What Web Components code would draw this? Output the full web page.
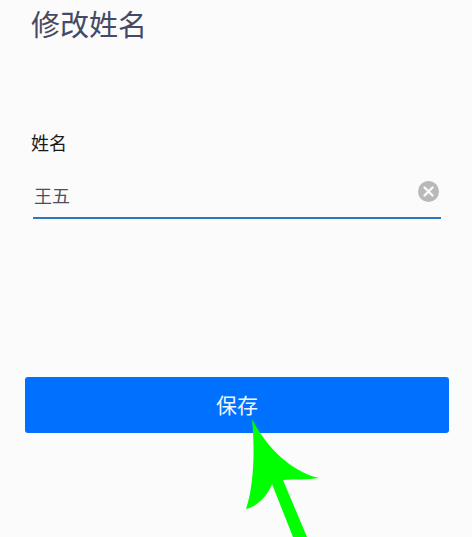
<!DOCTYPE html>
<html lang="zh">
<head>
<meta charset="utf-8">
<style>
  html, body { margin: 0; height: 100%; background: #fbfbfb; overflow: hidden; }
  body { font-family: "Noto Sans CJK SC", "Noto Sans", sans-serif; }
</style>
</head>
<body>
<edit-name-page>
  <span slot="title">修改姓名</span>
  <name-field label="姓名" value="王五"></name-field>
  <save-button slot="action">保存</save-button>
</edit-name-page>

<script>
class EditNamePage extends HTMLElement {
  connectedCallback() {
    if (!this.shadowRoot) this.attachShadow({ mode: 'open' })
    this.shadowRoot.innerHTML = `
      <style>
        :host { display: block; position: relative; width: 472px; height: 537px; overflow: hidden; }
        .title { padding: 3px 0 0 31px; font-size: 29px; line-height: 40px; color: #444a66; }
        .body { padding: 86px 31px 0 31px; }
        .action { padding: 158px 23px 0 25px; }
        svg { position: absolute; left: 0; top: 0; }
      </style>
      <div class="title"><slot name="title"></slot></div>
      <div class="body"><slot></slot></div>
      <div class="action"><slot name="action"></slot></div>
      <svg width="472" height="537" viewBox="0 0 472 537" aria-hidden="true">
        <path fill="#00ff00" d="M252 419 C264 442 286 470 319 478 C308 480 295 479 283 480 L307 537 L293 537 L272 484 C268 495 258 506 246 509 C254 485 255 450 252 419 Z"/>
      </svg>
    `
  }
}

class NameField extends HTMLElement {
  connectedCallback() {
    if (!this.shadowRoot) this.attachShadow({ mode: 'open' })
    const label = this.getAttribute('label') ?? ''
    const value = this.getAttribute('value') ?? ''
    this.shadowRoot.innerHTML = `
      <style>
        :host { display: block; }
        .label { font-size: 18px; line-height: 26px; color: #1a1a1a; }
        .row {
          display: flex;
          align-items: flex-start;
          justify-content: space-between;
          margin: 15px 0 0 2px;
          width: 408px;
          height: 49px;
          box-sizing: border-box;
          border-bottom: 2px solid #2a78bd;
        }
        .value { margin: 12px 0 0 1px; font-size: 18px; line-height: 26px; color: #4a4f63; }
        .clear { margin: 11px 1px 0 0; width: 22px; height: 22px; flex-shrink: 0; }
      </style>
      <div class="label">${label}</div>
      <div class="row">
        <span class="value">${value}</span>
        <svg class="clear" viewBox="0 0 22 22" aria-hidden="true">
          <circle cx="10.5" cy="10.5" r="10.5" fill="#b9b9b9"/>
          <path d="M6.5 6.5 L14.5 14.5 M14.5 6.5 L6.5 14.5" stroke="#fbfbfb" stroke-width="2.4" stroke-linecap="round" fill="none"/>
        </svg>
      </div>
    `
  }
}

class SaveButton extends HTMLElement {
  connectedCallback() {
    if (!this.shadowRoot) this.attachShadow({ mode: 'open' })
    this.shadowRoot.innerHTML = `
      <style>
        :host { display: block; }
        .btn {
          display: flex;
          align-items: center;
          justify-content: center;
          height: 56px;
          padding-bottom: 2px;
          box-sizing: border-box;
          border-radius: 3px;
          background: #0070ff;
          color: #f2f7ff;
          font-size: 21px;
        }
      </style>
      <div class="btn"><slot></slot></div>
    `
  }
}

customElements.define('edit-name-page', EditNamePage)
customElements.define('name-field', NameField)
customElements.define('save-button', SaveButton)
</script>
</body>
</html>
